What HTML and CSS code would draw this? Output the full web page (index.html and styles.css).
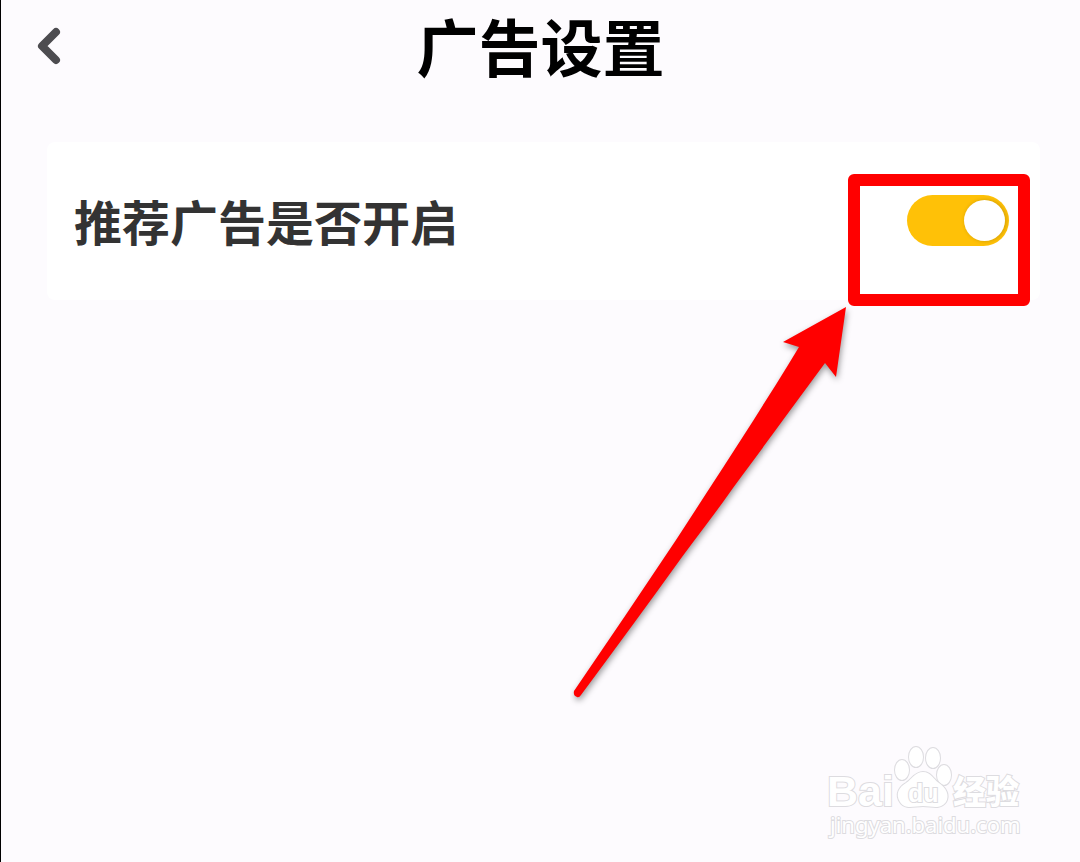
FILE: index.html
```html
<!DOCTYPE html>
<html lang="zh-CN">
<head>
    <meta charset="UTF-8">
    <meta name="viewport" content="width=device-width, initial-scale=1.0">
    <title>广告设置</title>
    <link rel="stylesheet" href="styles.css">
</head>
<body>
    <header class="navbar">
        <button type="button" class="back-button" aria-label="返回">
            <svg width="28" height="40" viewBox="0 0 28 40" aria-hidden="true">
                <path d="M20 6 L6 20 L20 34" />
            </svg>
        </button>
        <h1>广告设置</h1>
    </header>

    <main>
        <div class="setting-row">
            <label for="ad_switch">推荐广告是否开启</label>
            <input type="checkbox" class="switch" id="ad_switch" role="switch" checked>
            <div class="highlight"></div>
            <svg class="arrow" width="300" height="410" viewBox="0 0 300 410" aria-hidden="true">
                <path d="M276 7 L213 42 L229 47 C214 72 198 97 183 121 C158 160 132 200 106 240 C72 291 38 341 4 391 Q3 396 7 397 Q9 398 11 395 C45 349 79 303 112 257 C129 234 147 211 163 188 C180 165 197 142 213 120 C227 101 241 82 255 63 L266 77 Z" />
            </svg>
        </div>
    </main>

    <footer class="watermark">
        <svg width="200" height="96" viewBox="0 0 200 96" role="img" aria-label="Baidu 经验">
            <text class="brand" x="3" y="60" font-size="43">Bai</text>
            <ellipse cx="78" cy="24" rx="7" ry="10" />
            <ellipse cx="92" cy="11" rx="7" ry="10" />
            <ellipse cx="109" cy="12" rx="7" ry="10" />
            <ellipse cx="120" cy="29" rx="7" ry="10" />
            <path d="M99 26 C91 26 88 33 82 37 C75 41 71 48 76 56 C81 64 90 60 99 60 C108 60 116 64 122 56 C126 49 122 42 115 37 C109 33 107 26 99 26 Z" />
            <text class="brand" x="84" y="56" font-size="25">du</text>
            <text class="brand-cn" x="129" y="58" font-size="33">经验</text>
            <text class="site" x="6" y="87" font-size="22">jingyan.baidu.com</text>
        </svg>
    </footer>
</body>
</html>
```
FILE: styles.css
```css
:root {
    --page-bg: #fdfbfe;
    --card-bg: #ffffff;
    --title: #000000;
    --label: #333333;
    --icon: #4d4c50;
    --switch-on: #ffc107;
    --mark-red: #ff0000;
    --watermark-line: #dddce0;
}

* {
    box-sizing: border-box;
}

body {
    margin: 0;
    min-height: 100vh;
    background-color: var(--page-bg);
    border-left: 1px solid #000;
    font-family: "Noto Sans CJK SC", sans-serif;
    position: relative;
}

.navbar {
    display: grid;
    grid-template-columns: 80px 1fr 80px;
    align-items: center;
    height: 92px;
}

.back-button {
    justify-self: start;
    display: flex;
    margin-left: 35px;
    padding: 0;
    border: none;
    background: none;
    cursor: pointer;
}

.back-button path {
    fill: none;
    stroke: var(--icon);
    stroke-width: 8;
    stroke-linecap: round;
    stroke-linejoin: round;
}

h1 {
    margin: 0;
    padding-bottom: 2px;
    color: var(--title);
    font-size: 62px;
    font-weight: 700;
    line-height: 90px;
    text-align: center;
}

main {
    padding: 50px 40px 0 46px;
}

.setting-row {
    position: relative;
    display: flex;
    justify-content: space-between;
    align-items: center;
    height: 158px;
    padding: 0 31px 2px 27px;
    background-color: var(--card-bg);
    border-radius: 8px;
}

.setting-row label {
    color: var(--label);
    font-size: 48px;
    font-weight: 700;
    line-height: 64px;
}

.switch {
    appearance: none;
    display: flex;
    justify-content: flex-end;
    align-items: center;
    width: 102px;
    height: 51px;
    margin: 0;
    padding: 4px;
    border-radius: 26px;
    background-color: var(--switch-on);
    cursor: pointer;
}

.switch::before {
    content: "";
    width: 41px;
    height: 41px;
    border-radius: 50%;
    background-color: var(--card-bg);
    box-shadow: 1px 0 4px rgba(0, 0, 0, 0.2);
}

.switch:not(:checked) {
    justify-content: flex-start;
    background-color: #ddd;
}

/* callout drawn over the switch */
.highlight {
    position: absolute;
    top: 32px;
    right: 10px;
    width: 182px;
    height: 132px;
    border: 12px solid var(--mark-red);
    border-radius: 6px;
    pointer-events: none;
}

.arrow {
    position: absolute;
    top: 158px;
    right: 170px;
    pointer-events: none;
}

.arrow path {
    fill: var(--mark-red);
    filter: drop-shadow(1px 3px 3px rgba(0, 0, 0, 0.4));
}

.watermark {
    position: absolute;
    right: 56px;
    bottom: 20px;
}

.watermark svg {
    display: block;
    overflow: visible;
    fill: #fff;
    stroke: var(--watermark-line);
    stroke-width: 2;
    paint-order: stroke;
}

.brand {
    font-family: "Liberation Sans", Arial, sans-serif;
    font-weight: 700;
}

.brand-cn {
    font-weight: 900;
}

.site {
    font-family: "Noto Sans", sans-serif;
}
```
